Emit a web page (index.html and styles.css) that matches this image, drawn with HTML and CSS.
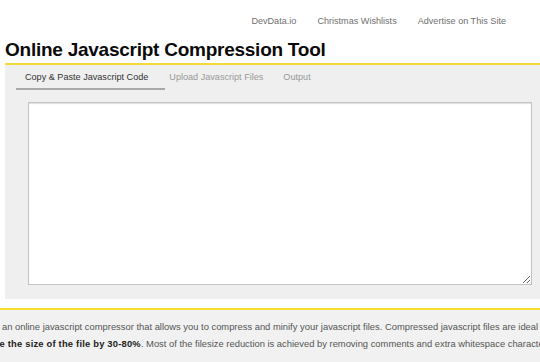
FILE: index.html
```html
<!DOCTYPE html>
<html lang="en">
<head>
    <meta charset="UTF-8">
    <meta name="viewport" content="width=device-width, initial-scale=1.0">
    <title>Online Javascript Compression Tool</title>
    <link rel="stylesheet" href="styles.css">
</head>
<body>
    <div class="top-links">
        <a href="#">DevData.io</a>
        <a href="#">Christmas Wishlists</a>
        <a href="#">Advertise on This Site</a>
    </div>

    <h1 class="title">Online Javascript Compression Tool</h1>

    <div class="tool">
        <div class="tabs">
            <a href="#" class="tab active">Copy &amp; Paste Javascript Code</a>
            <a href="#" class="tab">Upload Javascript Files</a>
            <a href="#" class="tab">Output</a>
        </div>
        <div class="editor">
            <textarea id="code"></textarea>
        </div>
    </div>

    <div class="about">
        <p>is an online javascript compressor that allows you to compress and minify your javascript files. Compressed javascript files are ideal for production websites because they<br><b>reduce the size of the file by 30-80%</b>. Most of the filesize reduction is achieved by removing comments and extra whitespace characters.</p>
    </div>
</body>
</html>
```

FILE: styles.css
```css
*,
*:before,
*:after {
    margin: 0;
    padding: 0;
    box-sizing: border-box;
}

body {
    font-family: "Liberation Sans", Arial, sans-serif;
    background-color: #ffffff;
    overflow: hidden;
}

.top-links {
    display: flex;
    justify-content: flex-end;
    gap: 21px;
    padding: 15px 34px 0 0;
}

.top-links a {
    font-size: 9.1px;
    line-height: 12px;
    color: #707070;
    text-decoration: none;
}

.title {
    margin: 12px 0 2px 5px;
    font-size: 19px;
    line-height: 22px;
    letter-spacing: -0.25px;
    font-weight: bold;
    color: #0a0a0a;
}

.tool {
    margin-left: 5px;
    border-top: 2px solid #f3d936;
    background-color: #efefef;
    padding-bottom: 14px;
}

.tabs {
    display: flex;
    padding-left: 11px;
}

.tab {
    font-size: 9.1px;
    line-height: 12px;
    padding: 6px 10px 7px 10px;
    color: #999999;
    text-decoration: none;
}

.tab.active {
    color: #333333;
    padding: 6px 17px 5px 9px;
    border-bottom: 2px solid #a8a8a8;
}

.tab.active + .tab {
    padding-left: 4px;
}

.editor {
    padding: 12px 8px 0 23px;
}

.editor textarea {
    display: block;
    width: 100%;
    height: 183px;
    border: 1px solid #c4c4c4;
    box-shadow: inset 0 1px 1px #dddddd;
    background-color: #ffffff;
}

.about {
    margin-top: 9px;
    border-top: 2px solid #f7dc2a;
    background-color: #f1f1f1;
    padding-top: 8px;
    height: 60px;
    overflow: hidden;
}

.about p {
    white-space: nowrap;
    font-size: 9.4px;
    line-height: 17px;
    color: #555555;
    margin-left: -27px;
    text-indent: 19.6px;
}

.about b {
    color: #222222;
    letter-spacing: 0.2px;
}
```
